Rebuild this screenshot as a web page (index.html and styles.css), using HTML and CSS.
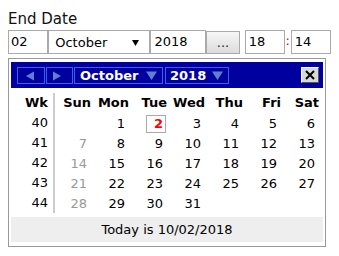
FILE: index.html
```html
<!DOCTYPE html>
<html>
<head>
<meta charset="utf-8">
<link rel="stylesheet" href="styles.css">
</head>
<body>
<div class="field">
  <div class="label">End Date</div>
  <div class="row">
    <div class="inp w-day">02</div>
    <div class="sel"><span>October</span><svg class="caret" width="7" height="7" viewBox="0 0 7 7"><path d="M0 1h7L3.5 7z" fill="#000"/></svg></div>
    <div class="inp w-year">2018</div>
    <div class="btn">...</div>
    <div class="inp w-time hour">18</div>
    <span class="colon">:</span>
    <div class="inp w-time">14</div>
  </div>
  <div class="cal">
    <div class="cal-head">
      <span class="nb nb-prev"><svg width="10" height="10" viewBox="0 0 10 10"><path d="M9 0.5V9.5L1 5z" fill="#5f80d2"/></svg></span>
      <span class="nb nb-next"><svg width="10" height="10" viewBox="0 0 10 10"><path d="M1 0.5V9.5L9 5z" fill="#5f80d2"/></svg></span>
      <span class="nb nb-month"><b>October</b><svg width="11" height="9" viewBox="0 0 11 9"><path d="M0 0.5H11L5.5 9z" fill="#5f80d2"/></svg></span>
      <span class="nb nb-year"><b>2018</b><svg width="11" height="9" viewBox="0 0 11 9"><path d="M0 0.5H11L5.5 9z" fill="#5f80d2"/></svg></span>
      <span class="close"><svg width="10" height="10" viewBox="0 0 10 10"><path d="M1 1L9 9M9 1L1 9" stroke="#000" stroke-width="2"/></svg></span>
    </div>
    <div class="grid">
      <div class="hd wk">Wk</div><div class="hd">Sun</div><div class="hd">Mon</div><div class="hd">Tue</div><div class="hd">Wed</div><div class="hd">Thu</div><div class="hd">Fri</div><div class="hd">Sat</div>

      <div class="wk">40</div><div class="d"></div><div class="d"><span>1</span></div><div class="d"><span class="today">2</span></div><div class="d"><span>3</span></div><div class="d"><span>4</span></div><div class="d"><span>5</span></div><div class="d"><span>6</span></div>

      <div class="wk">41</div><div class="d sun"><span>7</span></div><div class="d"><span>8</span></div><div class="d"><span>9</span></div><div class="d"><span>10</span></div><div class="d"><span>11</span></div><div class="d"><span>12</span></div><div class="d"><span>13</span></div>

      <div class="wk">42</div><div class="d sun"><span>14</span></div><div class="d"><span>15</span></div><div class="d"><span>16</span></div><div class="d"><span>17</span></div><div class="d"><span>18</span></div><div class="d"><span>19</span></div><div class="d"><span>20</span></div>

      <div class="wk">43</div><div class="d sun"><span>21</span></div><div class="d"><span>22</span></div><div class="d"><span>23</span></div><div class="d"><span>24</span></div><div class="d"><span>25</span></div><div class="d"><span>26</span></div><div class="d"><span>27</span></div>

      <div class="wk">44</div><div class="d sun"><span>28</span></div><div class="d"><span>29</span></div><div class="d"><span>30</span></div><div class="d"><span>31</span></div><div class="d"></div><div class="d"></div><div class="d"></div>
    </div>
    <div class="foot">Today is 10/02/2018</div>
  </div>
</div>
</body>
</html>
```
FILE: styles.css
```css
* { box-sizing: border-box; }
body {
  margin: 8px;
  background: #fff;
  font-family: "DejaVu Sans", Verdana, sans-serif;
  font-size: 13px;
  color: #000;
}
.label {
  font-size: 15px;
  line-height: 22px;
  height: 22px;
  color: #111;
}
.row {
  display: flex;
  align-items: center;
  height: 24px;
}
.inp {
  height: 24px;
  border: 1px solid #aaa;
  line-height: 22px;
  padding-left: 2px;
  background: #fff;
}
.w-day { width: 41px; }
.w-year { width: 57px; padding-left: 3px; }
.w-time { width: 41px; padding-left: 3px; }
.hour { margin-left: 5px; }
.sel {
  width: 104px;
  height: 24px;
  border: 1px solid #aaa;
  display: flex;
  align-items: center;
  justify-content: space-between;
  padding: 0 10px 0 6px;
  background: #fff;
}
.btn {
  width: 34px;
  height: 23px;
  border: 1px solid #aaa;
  background: linear-gradient(#f6f6f6, #dcdcdc);
  text-align: center;
  line-height: 21px;
  color: #222;
}
.colon {
  width: 6px;
  color: #c00;
  text-align: center;
  line-height: 22px;
  align-self: flex-start;
}
.cal {
  margin-top: 4px;
  width: 318px;
  border: 1px solid #999;
  padding: 3px 2px 4px 2px;
}
.cal-head {
  background: #00009f;
  height: 26px;
  display: flex;
  align-items: flex-start;
  padding: 5px 4px 0 6px;
}
.nb {
  height: 17px;
  border: 1px solid #3b5cf5;
  display: flex;
  align-items: center;
  justify-content: center;
}
.nb-prev { width: 28px; }
.nb-prev svg { margin-left: -3px; }
.nb-next { width: 27px; margin-left: 1px; }
.nb-next svg { margin-left: -5px; }
.nb-month { width: 89px; margin-left: 1px; justify-content: space-between; padding: 0 5px 0 5px; }
.nb-year { width: 64px; margin-left: 2px; justify-content: space-between; padding: 0 5px 0 4px; }
.nb b {
  color: #fff;
  font-weight: bold;
  font-size: 13px;
  line-height: 15px;
}
.close {
  margin-left: auto;
  width: 18px;
  height: 16px;
  background: #d8d8d8;
  border: 1px solid;
  border-color: #fff #555 #555 #fff;
  display: flex;
  align-items: center;
  justify-content: center;
}
.grid {
  margin-top: 5px;
  display: grid;
  grid-template-columns: 44px repeat(7, 38px);
  grid-auto-rows: 20px;
  line-height: 20px;
}
.hd {
  font-weight: bold;
  text-align: right;
  padding-right: 2px;
}
.wk {
  text-align: right;
  padding-right: 5px;
  border-right: 2px solid #ccc;
}
.hd.wk { padding-right: 5px; }
.d {
  text-align: right;
  padding-right: 3px;
}
.d span {
  display: inline-block;
  border: 1px solid transparent;
  padding: 0 2px;
  line-height: 16px;
  vertical-align: middle;
}
.d.sun span { color: #999; }
.d span.today {
  width: 20px;
  height: 18px;
  border-color: #aaa;
  color: #f00;
  font-weight: bold;
}
.foot {
  margin-top: 4px;
  height: 25px;
  line-height: 25px;
  background: #eee;
  text-align: center;
}
```
